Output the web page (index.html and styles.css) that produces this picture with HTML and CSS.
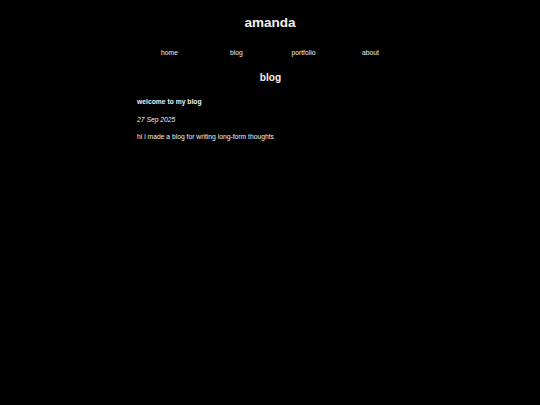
FILE: index.html
```html
<!DOCTYPE html>
<html lang="en">
<head>
<meta charset="utf-8">
<title>amanda</title>
<link rel="stylesheet" href="styles.css">
</head>
<body>
<div class="page">
  <header class="site-header">
    <h1 class="site-title">amanda</h1>
    <nav class="nav">
      <a class="nav-link" href="#">home</a>
      <a class="nav-link" href="#">blog</a>
      <a class="nav-link" href="#">portfolio</a>
      <a class="nav-link" href="#">about</a>
    </nav>
  </header>
  <main class="content">
    <h2 class="section-title">blog</h2>
    <article class="post">
      <h3 class="post-title">welcome to my blog</h3>
      <p class="post-date">27 Sep 2025</p>
      <p class="post-body">hi i made a blog for writing long-form thoughts</p>
    </article>
  </main>
</div>
</body>
</html>
```

FILE: styles.css
```css
html, body {
  margin: 0;
  padding: 0;
  background: #000;
}
body {
  color: #f2f2f2;
  font-family: "Liberation Sans", Arial, sans-serif;
  font-size: 6.75px;
  line-height: 1.15;
}
.page {
  width: 268px;
  margin: 0 auto;
  padding-top: 14.6px;
}
.site-title {
  margin: 0;
  font-size: 13.5px;
  font-weight: bold;
  text-align: center;
  line-height: 1.15;
}
.nav {
  display: grid;
  grid-template-columns: repeat(4, 1fr);
  margin-top: 19.2px;
}
.nav-link {
  color: #f2f2f2;
  text-decoration: none;
  text-align: center;
}
.content {
  display: flex;
  flex-direction: column;
  padding-left: 1px;
}
.section-title {
  margin: 14.9px 0 0;
  font-size: 10.125px;
  font-weight: bold;
  text-align: center;
  line-height: 1.15;
}
.post-title {
  margin: 14.2px 0 0;
  font-size: 6.75px;
  font-weight: bold;
}
.post-date {
  margin: 10.8px 0 0;
  font-style: italic;
}
.post-body {
  margin: 9.2px 0 0;
}
```
